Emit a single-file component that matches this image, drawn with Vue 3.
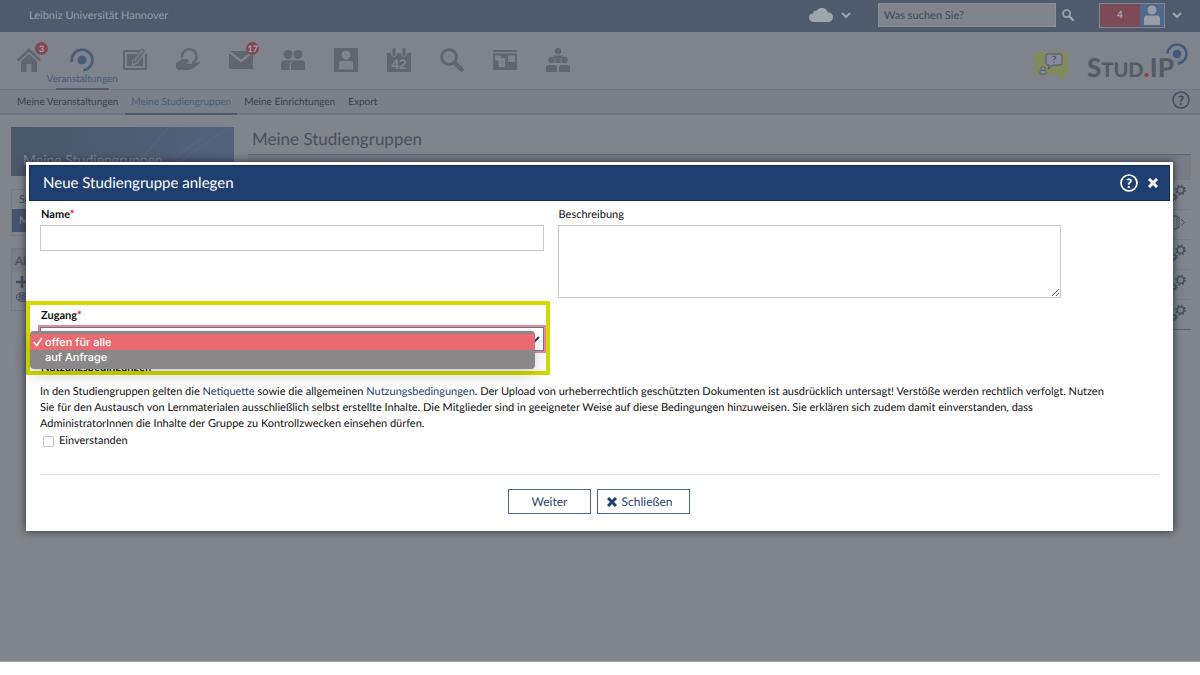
<script setup>
import { ref } from 'vue'

const subNav = ['Meine Veranstaltungen', 'Meine Studiengruppen', 'Meine Einrichtungen', 'Export']
const icons = [
  { id: 'home', label: 'Start', badge: '3' },
  { id: 'seminar', label: 'Veranstaltungen', active: true },
  { id: 'edit', label: 'Arbeitsplatz' },
  { id: 'files', label: 'Dateien' },
  { id: 'mail', label: 'Nachrichten', badge: '17' },
  { id: 'people', label: 'Community' },
  { id: 'profile', label: 'Profil' },
  { id: 'calendar', label: 'Planer' },
  { id: 'search', label: 'Suche' },
  { id: 'board', label: 'Schwarzes Brett' },
  { id: 'group', label: 'Gruppen' }
]
const rows = ['gear', 'exit', 'gear', 'gear', 'gear']
const options = ['offen für alle', 'auf Anfrage']
const access = ref(options[0])
const name = ref('')
const description = ref('')
const agreed = ref(false)
</script>

<template>
  <div class="page">
    <header class="topbar">
      <span class="uni">Leibniz Universität Hannover</span>
      <button class="plain cloud" aria-label="Cloud">
        <svg width="24" height="14" viewBox="0 0 24 14"><path d="M5 14C2 14 0 12 0 9.500C0 7 2 5.500 4 5.500C4 3 6 2 8 2.500C9.500 .5 11 0 13 0C16 0 18.500 2 18.800 4.500C22 4.300 24 6.500 24 9C24 12 22 14 19 14Z" fill="currentColor" /></svg>
        <svg width="10" height="7" viewBox="0 0 10 7"><path d="M1 1L5 5L9 1" fill="none" stroke="currentColor" stroke-width="2" /></svg>
      </button>
      <div class="search">
        <input type="text" placeholder="Was suchen Sie?" aria-label="Was suchen Sie?" />
        <button class="plain" aria-label="Suchen">
          <svg width="12" height="12" viewBox="0 0 12 12" fill="none" stroke="currentColor"><circle cx="4.600" cy="4.600" r="3.600" stroke-width="1.700" /><path d="M7.300 7.300L11 11" stroke-width="2.300" stroke-linecap="round" /></svg>
        </button>
      </div>
      <button class="plain account" aria-label="Benutzerkonto">
        <span class="count">4</span>
        <span class="avatar">
          <svg width="22" height="22" viewBox="0 0 22 22" fill="currentColor"><circle cx="11" cy="6" r="4.500" /><path d="M3 21V15Q3 11.500 6 11.500H16Q19 11.500 19 15V21Z" /></svg>
        </span>
      </button>
      <button class="plain" aria-label="Menü">
        <svg width="10" height="7" viewBox="0 0 10 7"><path d="M1 1L5 5L9 1" fill="none" stroke="currentColor" stroke-width="2" /></svg>
      </button>
    </header>

    <div class="mainbar">
      <nav class="icons" aria-label="Hauptnavigation">
        <a v-for="i in icons" :key="i.id" href="#" :class="{ active: i.active }" :aria-label="i.label">
          <svg width="24" height="24" viewBox="0 0 24 24" fill="currentColor">
            <path v-if="i.id === 'home'" d="M12 0L24 11.500L22 13.200L12 3.800L2 13.200L0 11.500ZM12 6L20 13.300V24H14.500V16H9.500V24H4V13.300Z" />
            <g v-else-if="i.id === 'seminar'">
              <circle cx="12" cy="12" r="4.500" />
              <path d="M2 14A10.300 10.300 0 1 1 13.500 22.200" fill="none" stroke="currentColor" stroke-width="2.800" />
            </g>
            <g v-else-if="i.id === 'edit'">
              <path d="M0 2H17L15.500 4H2V20H22V7L24 4V22H0Z" />
              <path d="M4 6H14L9 12.500V18L14.500 15.500L20 8.500V18H4Z" />
              <path d="M10.500 15L11.200 11L17.500 2Q20.500 .5 21 3.500L14.300 13Z" fill="none" stroke="currentColor" stroke-width="1.300" />
              <path d="M13 12L18.800 3.800" fill="none" stroke="currentColor" stroke-width="1" />
            </g>
            <g v-else-if="i.id === 'files'">
              <path d="M6 9.500A7.300 7.300 0 1 1 16.500 15" fill="none" stroke="currentColor" stroke-width="2.400" />
              <path d="M0 15L6 11L11 11Q14 12.500 12 14.500L9 15L15 16L22 14Q25 14 23 16L15 21.500Q10 22.500 6 21.500L2 22L0 20Z" />
            </g>
            <path v-else-if="i.id === 'mail'" d="M1 3H23L12 11.500ZM0 5L12 14.500L24 5V21H0Z" />
            <g v-else-if="i.id === 'people'">
              <circle cx="7" cy="6.500" r="4.500" /><circle cx="17" cy="6.500" r="4.500" />
              <path d="M0 22V16Q0 12.500 3.500 12.500H11Q8.500 14 8.500 17V22ZM10 22V16.500Q10 12.500 14 12.500H20.500Q24 12.500 24 16V22Z" />
            </g>
            <path v-else-if="i.id === 'profile'" fill-rule="evenodd" d="M0 0H24V24H0ZM12 2.500A4.500 4.500 0 1 0 12 11.500A4.500 4.500 0 1 0 12 2.500ZM5 21.500H19V16Q19 13 16 13H8Q5 13 5 16Z" />
            <g v-else-if="i.id === 'calendar'">
              <path d="M0 5H4V7Q7 11 10 7V5H14V7Q17 11 20 7V5H24V24H0Z" />
              <rect x="5.500" y="0" width="3" height="8" rx="1.500" /><rect x="15.500" y="0" width="3" height="8" rx="1.500" />
              <text x="12" y="21" text-anchor="middle" class="cal">42</text>
            </g>
            <g v-else-if="i.id === 'search'">
              <circle cx="9" cy="9" r="7.500" fill="none" stroke="currentColor" stroke-width="3" />
              <path d="M14.500 14.500L21.500 21.500" stroke="currentColor" stroke-width="4.500" stroke-linecap="round" />
            </g>
            <path v-else-if="i.id === 'board'" fill-rule="evenodd" d="M0 2H24V4H0ZM0 5.500H24V22H0ZM2 7.500V12.500H5.500V19H12V10H8V7.500ZM15 7.500V14H22V7.500Z" />
            <g v-else>
              <circle cx="12" cy="3.200" r="3.200" /><circle cx="5.500" cy="12" r="3.200" /><circle cx="18.500" cy="12" r="3.200" />
              <path d="M7.500 7.500H16.500V9Q14 10 14.500 13L15 15H9L9.500 13Q10 10 7.500 9ZM0 24V20Q0 17 3 17H8Q11 17 11 20V24ZM13 24V20Q13 17 16 17H21Q24 17 24 20V24Z" />
            </g>
          </svg>
          <span v-if="i.badge" class="badge">{{ i.badge }}</span>
          <span v-if="i.active" class="caption">{{ i.label }}</span>
        </a>
      </nav>
      <button class="plain chat" aria-label="Hilfe-Chat">
        <svg width="36" height="32" viewBox="0 0 36 32">
          <path d="M1 1H35V24H30L29 31L25 24H1Z" fill="#81895d" />
          <path d="M15 3H27Q29 3 29 5V12Q29 14 27 14H20L15 18L16.500 14H15Q13 14 13 12V5Q13 3 15 3Z" fill="#878b98" stroke="#4b5975" />
          <text x="21" y="12" text-anchor="middle" class="qmark">?</text>
          <circle cx="10" cy="17.500" r="2" fill="#878b98" stroke="#4b5975" stroke-width=".8" /><path d="M7 23V20.500Q7 19.500 8 19.500H12Q13 19.500 13 20.500V23Z" fill="#878b98" stroke="#4b5975" stroke-width=".8" />
        </svg>
      </button>
      <a href="#" class="logo" aria-label="Stud.IP">
        <span>S</span><span class="small">TUD</span><span class="dot">.</span><span>IP</span>
        <svg width="22" height="22" viewBox="0 0 22 22"><circle cx="11" cy="11" r="4.300" fill="#43577e" /><path d="M1.500 10.500A9.500 9.500 0 1 1 12 20.400" fill="none" stroke="#43577e" stroke-width="2.600" /></svg>
      </a>
    </div>

    <nav class="subnav" aria-label="Unternavigation">
      <a v-for="s in subNav" :key="s" href="#" :class="{ current: s === 'Meine Studiengruppen' }">{{ s }}</a>
      <button class="plain help" aria-label="Hilfe">
        <svg width="18" height="18" viewBox="0 0 18 18"><circle cx="9" cy="9" r="8" fill="none" stroke="currentColor" stroke-width="1.500" /><text x="9" y="13.500" text-anchor="middle" class="qhelp">?</text></svg>
      </button>
    </nav>

    <div class="body">
      <aside>
        <div class="banner">
          <svg viewBox="0 0 223 50" preserveAspectRatio="none"><path d="M115 50L158 0M150 50L218 0M138 50L190 12" fill="none" stroke="#75687e" stroke-width="1" /></svg>
          <span>Meine Studiengruppen</span>
        </div>
        <ul class="box views">
          <li><a href="#">Suche</a></li>
          <li class="on"><a href="#">Meine Studiengruppen</a></li>
        </ul>
        <section class="box actions">
          <h2>Aktionen</h2>
          <a href="#" aria-label="Neue Studiengruppe"><svg width="12" height="12" viewBox="0 0 12 12"><path d="M6 0V12M0 6H12" stroke="currentColor" stroke-width="2.500" /></svg></a>
          <a href="#" aria-label="Farbgruppierung"><svg width="12" height="10" viewBox="0 0 12 10"><ellipse cx="6" cy="5" rx="5.500" ry="4.300" fill="none" stroke="currentColor" /><path d="M2 5H10M4 2V8M7 2V8M3 3H9M3 7H9" stroke="currentColor" /></svg></a>
        </section>
      </aside>
      <main>
        <h1>Meine Studiengruppen</h1>
        <table aria-label="Meine Studiengruppen">
          <thead><tr><th></th></tr></thead>
          <tbody>
            <tr v-for="(r, n) in rows" :key="n">
              <td>
                <svg v-if="r === 'gear'" width="18" height="18" viewBox="0 0 18 18" fill="none" stroke="currentColor">
                  <circle cx="12.500" cy="6" r="3.300" stroke-width="1.500" /><circle cx="12.500" cy="6" r="4.600" stroke-width="1.600" stroke-dasharray="1.800 1.800" />
                  <circle cx="6" cy="13" r="2" stroke-width="1.400" /><circle cx="6" cy="13" r="3.300" stroke-width="1.200" stroke-dasharray="1.300 1.300" />
                </svg>
                <svg v-else width="18" height="18" viewBox="0 0 18 18" fill="none" stroke="currentColor"><path d="M3 2H9V15H3ZM9 3H11V14H9M13 5L16.500 8.500L13 12" /></svg>
              </td>
            </tr>
          </tbody>
        </table>
      </main>
    </div>

    <div class="dialog" role="dialog" aria-labelledby="dlg-title">
      <div class="titlebar">
        <h2 id="dlg-title">Neue Studiengruppe anlegen</h2>
        <button class="plain" aria-label="Hilfe">
          <svg width="18" height="18" viewBox="0 0 18 18"><circle cx="9" cy="9" r="8" fill="none" stroke="currentColor" stroke-width="1.700" /><text x="9" y="13.500" text-anchor="middle" class="qhelp">?</text></svg>
        </button>
        <button class="plain" aria-label="Dialog schließen">
          <svg width="10" height="10" viewBox="0 0 10 10"><path d="M1 1L9 9M9 1L1 9" stroke="currentColor" stroke-width="3" /></svg>
        </button>
      </div>
      <form @submit.prevent>
        <div class="fields">
          <div class="field">
            <label for="f-name"><b>Name<i>*</i></b></label>
            <input id="f-name" v-model="name" type="text" />
          </div>
          <div class="field">
            <label for="f-desc">Beschreibung</label>
            <textarea id="f-desc" v-model="description"></textarea>
          </div>
        </div>
        <div class="access">
          <label for="f-access"><b>Zugang<i>*</i></b></label>
          <div class="selectwrap">
            <select id="f-access" v-model="access"><option v-for="o in options" :key="o">{{ o }}</option></select>
            <svg width="10" height="7" viewBox="0 0 10 7"><path d="M1 1L5 5L9 1" fill="none" stroke="currentColor" stroke-width="2" /></svg>
          </div>
          <div class="frame"></div>
          <ul class="popup" role="listbox" aria-label="Zugang">
            <li v-for="o in options" :key="o" role="option" :aria-selected="o === access" @click="access = o">
              <svg width="10" height="10" viewBox="0 0 10 10"><path v-if="o === access" d="M1 5.500L3.800 8.500L8.500 1.500" fill="none" stroke="currentColor" stroke-width="1.600" stroke-linecap="round" /></svg>
              {{ o }}
            </li>
          </ul>
        </div>
        <h3>Nutzungsbedingungen</h3>
        <p>In den Studiengruppen gelten die <a href="#">Netiquette</a> sowie die allgemeinen <a href="#">Nutzungsbedingungen</a>. Der Upload von urheberrechtlich geschützten Dokumenten ist ausdrücklich untersagt! Verstöße werden rechtlich verfolgt. Nutzen Sie für den Austausch von Lernmaterialen ausschließlich selbst erstellte Inhalte. Die Mitglieder sind in geeigneter Weise auf diese Bedingungen hinzuweisen. Sie erklären sich zudem damit einverstanden, dass AdministratorInnen die Inhalte der Gruppe zu Kontrollzwecken einsehen dürfen.</p>
        <label class="agree"><input v-model="agreed" type="checkbox" />Einverstanden</label>
        <div class="buttons">
          <button type="submit">Weiter</button>
          <button type="button" class="close"><svg width="10" height="10" viewBox="0 0 10 10"><path d="M1 1L9 9M9 1L1 9" stroke="currentColor" stroke-width="3" /></svg>Schließen</button>
        </div>
      </form>
    </div>
  </div>
</template>

<style>
body { background: #fff; }
</style>

<style scoped>
* { box-sizing: border-box; }
.page { position: relative; min-height: calc(100vh - 13px); background: #80848b; border-bottom: 1px solid #a0a2aa; font-family: Lato, sans-serif; font-size: 11px; color: #3a414c; text-rendering: geometricPrecision; }
a { color: inherit; text-decoration: none; }
svg { display: block; }
h1, h2, h3, p, ul { margin: 0; padding: 0; font-weight: 400; list-style: none; }
input, textarea, select, button { font: inherit; color: inherit; text-rendering: inherit; }
.plain { display: flex; align-items: center; padding: 0; border: 0; background: none; }

.topbar { display: flex; align-items: center; height: 32px; padding: 0 18px 2px 29px; background: #4f5b6d; color: #a0a4ab; }
.uni { flex: 1; color: #979da6; }
.cloud { gap: 8px; margin-right: 27px; }
.search { display: flex; align-items: center; gap: 6px; margin-right: 25px; }
.search input { width: 178px; height: 24px; padding: 0 5px; border: 1px solid #8a8e96; border-radius: 0; background: #80848b; }
.search input::placeholder { color: #454b55; opacity: 1; }
.account { height: 25px; margin-right: 7px; border: 1px solid #7f8590; }
.count { width: 40px; line-height: 23px; background: #7d4a58; color: #a9a5ac; font-size: 10px; font-weight: 700; }
.avatar { padding: 0 1px; background: #50698b; color: #979ca5; }

.mainbar { display: flex; align-items: stretch; height: 58px; padding: 0 12px 0 3px; border-bottom: 1px solid #727782; background: #7f838b; }
.icons { display: grid; grid-template-columns: repeat(11, 1fr); width: 581px; color: #60666f; }
.icons a { position: relative; display: flex; justify-content: center; padding-top: 16px; }
.icons a.active { color: #4a5c7d; }
.icons a.active::after { content: ''; position: absolute; bottom: -1px; left: 0; right: 0; height: 2px; background: #535c6b; }
.caption { position: absolute; top: 40px; left: 50%; transform: translateX(-50%); font-size: 10px; line-height: 14px; }
.badge { position: absolute; top: 10px; left: 32px; width: 13px; height: 13px; border-radius: 50%; background: #824a56; color: #aaa5ab; font-size: 9px; font-weight: 700; line-height: 13px; text-align: center; }
.cal { font: 700 14px "Liberation Sans", sans-serif; fill: #80848b; }
.qmark { font: 700 10px Lato, sans-serif; fill: #43557c; }
.qhelp { font: 900 13px Lato, sans-serif; fill: currentColor; }
.chat { align-items: flex-start; margin-left: auto; padding-top: 19px; }
.logo { position: relative; display: flex; align-items: baseline; width: 101px; margin-left: 18px; padding-top: 18px; color: #555b65; font-size: 26px; font-weight: 900; line-height: 34px; }
.logo .small { font-size: 20px; }
.logo .dot { color: #854650; }
.logo svg { position: absolute; top: 11px; right: 0; }

.subnav { display: flex; gap: 13px; height: 25px; padding: 0 10px 0 17px; border-bottom: 2px solid #71757f; background: #7b7f88; }
.subnav a { position: relative; font-size: 10px; line-height: 24px; }
.subnav .current { color: #4c5e7c; }
.subnav .current::after { content: ''; position: absolute; bottom: -2px; left: -6px; right: -6px; height: 2px; background: #4e5767; }
.help { margin-left: auto; padding-bottom: 3px; color: #414d61; }

.body { display: flex; gap: 14px; padding: 12px 9px 0 11px; }
aside { width: 223px; color: #414e65; }
.banner { position: relative; height: 49px; padding: 24px 12px 0; background: linear-gradient(90deg, #4b5769, #53617d); color: #7f8793; font-size: 14px; }
.banner svg { position: absolute; inset: 0; width: 100%; height: 100%; opacity: .5; }
.banner span { position: relative; }
.box { border: 1px solid #757983; }
.views { margin-top: 13px; padding: 2px 0 3px; }
.views li { padding: 0 7px; line-height: 16px; }
.views .on { margin-top: 1px; background: #475470; color: #8b919c; line-height: 23px; }
.actions { margin-top: 12px; padding-bottom: 8px; }
.actions h2 { padding: 0 3px; background: #7a7e87; font-size: 12px; line-height: 23px; }
.actions a { display: block; padding: 4px 4px 0; }
main { flex: 1; }
h1 { padding: 0 4px 3px; border-bottom: 1px solid #5c6576; color: #4a505b; font-size: 17px; line-height: 24px; }
table { width: 100%; border-collapse: collapse; border-bottom: 1px solid #566073; color: #465267; }
th { height: 24px; padding: 0; background: #797c86; }
td { height: 30px; padding: 0 5px 2px 0; border-top: 1px solid #777b84; }
td svg { margin-left: auto; }

.dialog { position: absolute; top: 162px; left: 26px; right: 27px; padding: 3px; background: #fff; color: #111; box-shadow: 0 0 8px rgba(20, 25, 35, .8); }
.titlebar { display: flex; align-items: center; gap: 10px; height: 36px; padding: 0 11px 1px 13px; border: 1px solid #102b5c; background: #1f3f70; color: #fff; }
.titlebar h2 { flex: 1; font-size: 15px; }
form { padding: 6px 11px 14px; }
.fields { display: grid; grid-template-columns: 45% 45%; gap: 14px; height: 94px; }
label { display: block; padding-left: 1px; line-height: 16px; }
label i { color: #f00; font-style: normal; }
.field input, .field textarea { display: block; width: 100%; height: 26px; margin-top: 2px; padding: 4px; border: 1px solid #c9c9c9; border-radius: 0; background: #fff; }
.field textarea { height: 73px; }
.access { position: relative; width: 45%; margin-top: 7px; }
.selectwrap { position: relative; margin-top: 3px; }
select { display: block; width: 100%; height: 24px; border: 1px solid #5d7ba5; border-radius: 0; outline: 2px solid #f08a90; background: #fff; appearance: none; }
.selectwrap svg { position: absolute; top: 9px; right: 4px; color: #1f3f70; }
.frame { position: absolute; top: -7px; left: -14px; right: -6px; height: 74px; border: 4px solid #d0dc00; }
.popup { position: absolute; top: 23px; left: -10px; right: 9px; padding: 3px 0 4px; border-radius: 4px; background: #8a8788; box-shadow: 0 6px 16px rgba(0, 0, 0, .18); color: #fff; font-family: Inter, sans-serif; font-weight: 500; }
.popup li { display: flex; align-items: center; gap: 2px; padding-left: 3px; line-height: 15px; }
.popup li[aria-selected="true"] { background: #e96a70; line-height: 16px; }
h3 { margin-top: 9px; padding-left: 1px; font-size: 11px; font-weight: 700; line-height: 16px; }
p { margin-top: 8px; padding-right: 45px; line-height: 16px; }
p a { color: #1f3f70; }
.agree { display: flex; align-items: center; gap: 5px; padding-left: 3px; line-height: 18px; }
.agree input { width: 11px; height: 11px; margin: 0; appearance: none; border: 1px solid #c4c4c4; border-radius: 2px; background: #fff; }
.buttons { display: flex; justify-content: center; gap: 6px; margin-top: 24px; padding: 14px 1px 0 0; border-top: 1px solid #d6dbe0; }
.buttons button { display: flex; align-items: center; justify-content: center; width: 83px; height: 25px; padding: 0; border: 1px solid #4b6690; background: #fff; color: #1f3f70; font-size: 12px; }
.buttons .close { gap: 5px; width: 93px; padding-right: 8px; }
</style>
